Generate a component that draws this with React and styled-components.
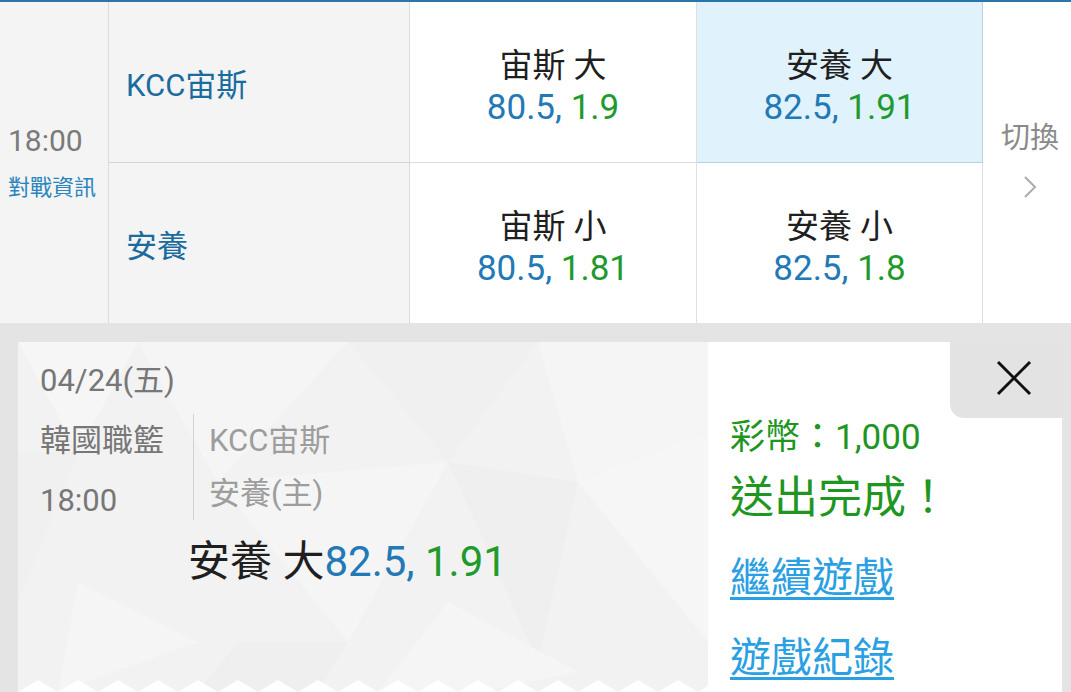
import React from "react";
import styled, { createGlobalStyle } from "styled-components";

const GlobalStyle = createGlobalStyle`
  html, body { margin: 0; padding: 0; }
  body {
    background: #e4e4e4;
    font-family: Roboto, "Noto Sans CJK TC", sans-serif;
    overflow: hidden;
  }
`;

const Page = styled.div`
  width: 1071px;
  height: 692px;
  overflow: hidden;
  display: flex;
  flex-direction: column;
`;

const Board = styled.div`
  display: grid;
  grid-template-columns: 109px 301px 287px 286px 1fr;
  grid-template-rows: 161px 160px;
  border-top: 2px solid #2c75a8;
  background: #fff;
  flex: none;
`;

const TimeCell = styled.div`
  grid-row: 1 / span 2;
  background: #f4f4f4;
  border-right: 1px solid #dcdcdc;
  display: flex;
  flex-direction: column;
  justify-content: center;
  padding: 4px 0 0 8px;
  gap: 7px;
`;

const TimeText = styled.div`
  font-size: 30px;
  line-height: 40px;
  color: #7a7a7a;
`;

const InfoLink = styled.div`
  font-size: 22px;
  line-height: 40px;
  color: #2a84bd;
`;

const TeamCell = styled.div`
  background: #f4f4f4;
  border-right: 1px solid #dcdcdc;
  border-bottom: ${(p) => (p.$top ? "1px solid #cdd6dc" : "none")};
  display: flex;
  align-items: center;
  padding: 0 0 0 17px;
  font-size: 31px;
  color: #1b6c9e;
`;

const OddsCell = styled.div`
  background: ${(p) => (p.$active ? "#e0f2fc" : "#fff")};
  border-right: 1px solid ${(p) => (p.$active ? "#b9d2e2" : "#e0e0e0")};
  border-bottom: ${(p) =>
    p.$top ? `1px solid ${p.$active ? "#b9d2e2" : "#dcdcdc"}` : "none"};
  display: flex;
  flex-direction: column;
  align-items: center;
  justify-content: center;
  padding-top: 10px;
`;

const OddsLabel = styled.div`
  font-size: 33px;
  line-height: 42px;
  color: #1f1f1f;
  white-space: pre;
`;

const OddsValue = styled.div`
  font-size: 35px;
  line-height: 42px;
  white-space: pre;
`;

const Blue = styled.span`
  color: #2279b6;
`;

const Green = styled.span`
  color: #1f9a2c;
`;

const SwitchCell = styled.div`
  grid-row: 1 / span 2;
  grid-column: 5;
  display: flex;
  flex-direction: column;
  align-items: center;
  justify-content: center;
  padding: 0 0 8px 6px;
  gap: 17px;
  color: #8a8a8a;
`;

const SwitchText = styled.div`
  font-size: 29px;
  line-height: 40px;
`;

const Card = styled.div`
  display: flex;
  margin: 19px 9px 0 18px;
  height: 350px;
  flex: none;
  overflow: hidden;
`;

const LeftPanel = styled.div`
  position: relative;
  width: 690px;
  flex: none;
  background: #f2f2f2;
  padding: 19px 0 0 22px;
  box-sizing: border-box;
  overflow: hidden;
`;

const Decor = styled.svg`
  position: absolute;
  left: 0;
  top: 0;
  width: 690px;
  height: 350px;
  z-index: 0;
`;

const Content = styled.div`
  position: relative;
  z-index: 1;
`;

const DateLine = styled.div`
  font-size: 31px;
  line-height: 40px;
  color: #777;
`;

const MetaRow = styled.div`
  display: flex;
  align-items: flex-start;
  margin-top: 10px;
  height: 120px;
`;

const MetaLeft = styled.div`
  width: 153px;
  flex: none;
`;

const MetaLine = styled.div`
  font-size: 31px;
  line-height: ${(p) => p.$lh}px;
  color: ${(p) => p.$color || "#777"};
  white-space: nowrap;
`;

const MetaRight = styled.div`
  border-left: 1px solid #d2d2d2;
  padding-left: 15px;
  margin-top: 3px;
`;

const Pick = styled.div`
  margin: 6px 0 0 148px;
  font-size: 42px;
  line-height: 50px;
  color: #1f1f1f;
  white-space: pre;
`;

const RightPanel = styled.div`
  flex: 1;
  background: #fff;
  display: flex;
  flex-direction: column;
`;

const CloseRow = styled.div`
  display: flex;
  justify-content: flex-end;
`;

const CloseTab = styled.button`
  width: 112px;
  height: 76px;
  border: none;
  padding: 0 0 4px 16px;
  background: #e3e3e3;
  border-bottom-left-radius: 14px;
  display: flex;
  align-items: center;
  justify-content: center;
  cursor: pointer;
`;

const Info = styled.div`
  padding-left: 22px;
`;

const Coins = styled.div`
  font-size: 35px;
  line-height: 40px;
  color: #1f961f;
  white-space: nowrap;
`;

const Done = styled.div`
  font-size: 44px;
  line-height: 80px;
  color: #1f961f;
  white-space: nowrap;
`;

const ActionLink = styled.a`
  display: block;
  font-size: 41px;
  line-height: 80px;
  color: #2aa0e2;
  text-decoration: underline;
  text-decoration-thickness: 3px;
  text-underline-offset: 5px;
  white-space: nowrap;
  cursor: pointer;
`;

const Chevron = () => (
  <svg width="14" height="24" viewBox="0 0 14 24">
    <polyline
      points="2,2 12,12 2,22"
      fill="none"
      stroke="#ababab"
      strokeWidth="2"
    />
  </svg>
);

const CloseIcon = () => (
  <svg width="38" height="38" viewBox="0 0 38 38">
    <line x1="3" y1="3" x2="35" y2="35" stroke="#111" strokeWidth="3" />
    <line x1="35" y1="3" x2="3" y2="35" stroke="#111" strokeWidth="3" />
  </svg>
);

const zigzag = (() => {
  const pts = ["0,350"];
  for (let x = 0; x < 700; x += 40) {
    pts.push(`${x + 20},338`);
    pts.push(`${x + 40},350`);
  }
  return pts.join(" ");
})();

const odds = [
  [
    { label: "宙斯 大", a: "80.5", b: "1.9" },
    { label: "安養 大", a: "82.5", b: "1.91", active: true },
  ],
  [
    { label: "宙斯 小", a: "80.5", b: "1.81" },
    { label: "安養 小", a: "82.5", b: "1.8" },
  ],
];

const teams = ["KCC宙斯", "安養"];

export default function App() {
  return (
    <Page>
      <GlobalStyle />
      <Board>
        <TimeCell>
          <TimeText>18:00</TimeText>
          <InfoLink>對戰資訊</InfoLink>
        </TimeCell>
        {teams.map((team, r) => (
          <React.Fragment key={team}>
            <TeamCell $top={r === 0} style={{ gridRow: r + 1, gridColumn: 2 }}>
              {team}
            </TeamCell>
            {odds[r].map((o, c) => (
              <OddsCell
                key={o.label}
                $top={r === 0}
                $active={o.active}
                style={{ gridRow: r + 1, gridColumn: c + 3 }}
              >
                <OddsLabel>{o.label}</OddsLabel>
                <OddsValue>
                  <Blue>{o.a}, </Blue>
                  <Green>{o.b}</Green>
                </OddsValue>
              </OddsCell>
            ))}
          </React.Fragment>
        ))}
        <SwitchCell>
          <SwitchText>切換</SwitchText>
          <Chevron />
        </SwitchCell>
      </Board>

      <Card>
        <LeftPanel>
          <Decor viewBox="0 0 690 350" preserveAspectRatio="none">
            <polygon points="0,0 120,0 60,110" fill="#f6f6f6" />
            <polygon points="120,0 330,0 200,140" fill="#f5f5f5" />
            <polygon points="330,0 520,0 430,120" fill="#f0f0f0" />
            <polygon points="520,0 690,0 690,90 560,140" fill="#f5f5f5" />
            <polygon points="0,110 60,110 0,260" fill="#f0f0f0" />
            <polygon points="200,140 430,120 330,300" fill="#f5f5f5" />
            <polygon points="430,120 560,140 520,320" fill="#efefef" />
            <polygon points="560,140 690,90 690,300" fill="#f6f6f6" />
            <polygon points="60,240 180,300 40,350" fill="#f5f5f5" />
            <polygon points="220,300 330,300 300,350 180,350" fill="#efefef" />
            <polygon points="430,260 560,330 460,350 360,350" fill="#f5f5f5" />
            <polygon points={zigzag} fill="#ffffff" />
          </Decor>
          <Content>
            <DateLine>04/24(五)</DateLine>
            <MetaRow>
              <MetaLeft>
                <MetaLine $lh={60}>韓國職籃</MetaLine>
                <MetaLine $lh={60}>18:00</MetaLine>
              </MetaLeft>
              <MetaRight>
                <MetaLine $lh={53} $color="#9d9d9d">KCC宙斯</MetaLine>
                <MetaLine $lh={53} $color="#9d9d9d">安養(主)</MetaLine>
              </MetaRight>
            </MetaRow>
            <Pick>
              安養 大<Blue>82.5, </Blue>
              <Green>1.91</Green>
            </Pick>
          </Content>
        </LeftPanel>
        <RightPanel>
          <CloseRow>
            <CloseTab aria-label="關閉">
              <CloseIcon />
            </CloseTab>
          </CloseRow>
          <Info>
            <Coins>彩幣：1,000</Coins>
            <Done>送出完成！</Done>
            <ActionLink>繼續遊戲</ActionLink>
            <ActionLink>遊戲紀錄</ActionLink>
          </Info>
        </RightPanel>
      </Card>
    </Page>
  );
}
